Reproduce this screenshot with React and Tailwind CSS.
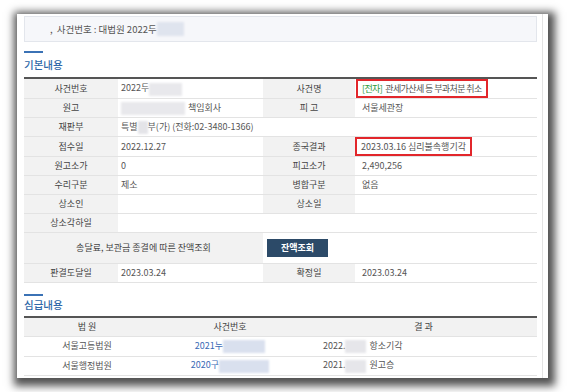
import React from 'react';

function Blur({ w, h = 13, color = 'bg-[#e2e5ec]' }) {
  return <span className={`inline-block align-middle blur-[1px] ${color}`} style={{ width: w, height: h }} />;
}

function Label({ children, colSpan }) {
  return (
    <td colSpan={colSpan} className="bg-[#f2f2f2] text-center text-[#444] border-b border-[#e3e3e3]">
      {children}
    </td>
  );
}

function Val({ children, colSpan, pad = 'pl-[3px]' }) {
  return (
    <td colSpan={colSpan} className={`bg-white text-[#555] border-b border-[#e3e3e3] ${pad}`}>
      {children}
    </td>
  );
}

function RedBox({ children, tight }) {
  return (
    <span
      className={`inline-flex items-center h-[19px] border-2 border-[#e2262b] px-[4px] whitespace-nowrap ${
        tight ? 'tracking-[-0.6px]' : ''
      }`}
    >
      {children}
    </span>
  );
}

function SectionTitle({ title, gap }) {
  return (
    <div>
      <div className="w-[19px] h-[2px] bg-[#3b72b5]" />
      <div className={`${gap} leading-[14px] text-[10.5px] font-medium text-[#2f68a8]`}>{title}</div>
    </div>
  );
}

export default function App() {
  const rows = 'h-[19px]';

  return (
    <div className="w-[567px] h-[392px] bg-white pt-[14px] pl-[17px] font-['Noto_Sans_CJK_KR','Noto_Sans',sans-serif] text-[9px]">
      <div className="w-[531px] h-[364px] bg-white shadow-[2px_3px_8px_5px_rgba(0,0,0,0.68)] pl-[7px] pr-[5px]">
        <div className="h-full border-r border-[#e3e3e3] pr-[5px]">
          {/* 사건번호 header */}
          <div className="pt-[2px]">
            <div className="h-[26px] border border-[#e3e6ec] bg-[#f6f7fa] flex items-center pl-[25px] text-[#555] text-[9.5px]">
              <span className="mr-[4px]">,</span>
              <span>사건번호 : 대법원 2022두</span>
              <Blur w={27} h={14} color="bg-[#dfe4ee]" />
            </div>
          </div>

          {/* 기본내용 */}
          <div className="mt-[9px]">
            <SectionTitle title="기본내용" gap="pt-[5px]" />
            <table className="mt-[5px] w-[513px] table-fixed border-collapse border-t-2 border-[#555]">
              <colgroup>
                <col className="w-[94px]" />
                <col className="w-[145px]" />
                <col className="w-[92px]" />
                <col className="w-[182px]" />
              </colgroup>
              <tbody>
                <tr className={rows}>
                  <Label>사건번호</Label>
                  <Val>2022두<Blur w={33} color="bg-[#e8e8ec]" /></Val>
                  <Label>사건명</Label>
                  <Val pad="pl-[1px]">
                    <RedBox tight>
                      <span className="text-[#2e9a3c] mr-[3px]">[전자]</span>관세가산세 등 부과처분 취소
                    </RedBox>
                  </Val>
                </tr>
                <tr className={rows}>
                  <Label>원고</Label>
                  <Val>
                    <Blur w={64} color="bg-[#e8e8ec]" />
                    <span className="ml-[3px]">책임회사</span>
                  </Val>
                  <Label>피 고</Label>
                  <Val pad="pl-[7px]">서울세관장</Val>
                </tr>
                <tr className={rows}>
                  <Label>재판부</Label>
                  <Val colSpan={3}>
                    특별<Blur w={10} color="bg-[#e4e4e8]" />부(가) (전화:02-3480-1366)
                  </Val>
                </tr>
                <tr className={rows}>
                  <Label>접수일</Label>
                  <Val>2022.12.27</Val>
                  <Label>종국결과</Label>
                  <Val pad="pl-[0px]">
                    <RedBox>2023.03.16 심리불속행기각</RedBox>
                  </Val>
                </tr>
                <tr className={rows}>
                  <Label>원고소가</Label>
                  <Val>0</Val>
                  <Label>피고소가</Label>
                  <Val pad="pl-[7px]">2,490,256</Val>
                </tr>
                <tr className={rows}>
                  <Label>수리구분</Label>
                  <Val>제소</Val>
                  <Label>병합구분</Label>
                  <Val pad="pl-[7px]">없음</Val>
                </tr>
                <tr className={rows}>
                  <Label>상소인</Label>
                  <Val />
                  <Label>상소일</Label>
                  <Val />
                </tr>
                <tr className={rows}>
                  <Label>상소각하일</Label>
                  <Val colSpan={3} />
                </tr>
                <tr className="h-[31px]">
                  <Label colSpan={2}>송달료, 보관금 종결에 따른 잔액조회</Label>
                  <Val colSpan={2} pad="pl-[4px]">
                    <button className="w-[61px] h-[18px] bg-[#2c4a68] text-white text-[9px] font-bold">
                      잔액조회
                    </button>
                  </Val>
                </tr>
                <tr className={rows}>
                  <Label>판결도달일</Label>
                  <Val>2023.03.24</Val>
                  <Label>확정일</Label>
                  <Val pad="pl-[7px]">2023.03.24</Val>
                </tr>
              </tbody>
            </table>
          </div>

          {/* 심급내용 */}
          <div className="mt-[11px]">
            <SectionTitle title="심급내용" gap="pt-[2px]" />
            <table className="mt-[4px] w-[513px] table-fixed border-collapse border-t-2 border-[#555]">
              <colgroup>
                <col className="w-[126px]" />
                <col className="w-[160px]" />
                <col className="w-[227px]" />
              </colgroup>
              <tbody>
                <tr className="h-[19px] bg-[#f2f2f2] text-[#444]">
                  <td className="text-center border-b border-[#e3e3e3]">법 원</td>
                  <td className="text-center border-b border-[#e3e3e3]">사건번호</td>
                  <td className="text-center border-b border-[#e3e3e3]">결 과</td>
                </tr>
                <tr className="h-[20px] text-[#555]">
                  <td className="text-center border-b border-[#e3e3e3]">서울고등법원</td>
                  <td className="text-center border-b border-[#e3e3e3] text-[#3a69b5]">
                    2021누<Blur w={42} color="bg-[#d9e0ee]" />
                  </td>
                  <td className="pl-[13px] border-b border-[#e3e3e3]">
                    2022.<Blur w={21} color="bg-[#e6e6ea]" /><span className="ml-[3px]">항소기각</span>
                  </td>
                </tr>
                <tr className="h-[19px] text-[#555]">
                  <td className="text-center border-b border-[#e3e3e3]">서울행정법원</td>
                  <td className="text-center border-b border-[#e3e3e3] text-[#3a69b5]">
                    2020구<Blur w={50} color="bg-[#d9e0ee]" />
                  </td>
                  <td className="pl-[13px] border-b border-[#e3e3e3]">
                    2021.<Blur w={21} color="bg-[#e6e6ea]" /><span className="ml-[3px]">원고승</span>
                  </td>
                </tr>
              </tbody>
            </table>
          </div>
        </div>
      </div>
    </div>
  );
}
